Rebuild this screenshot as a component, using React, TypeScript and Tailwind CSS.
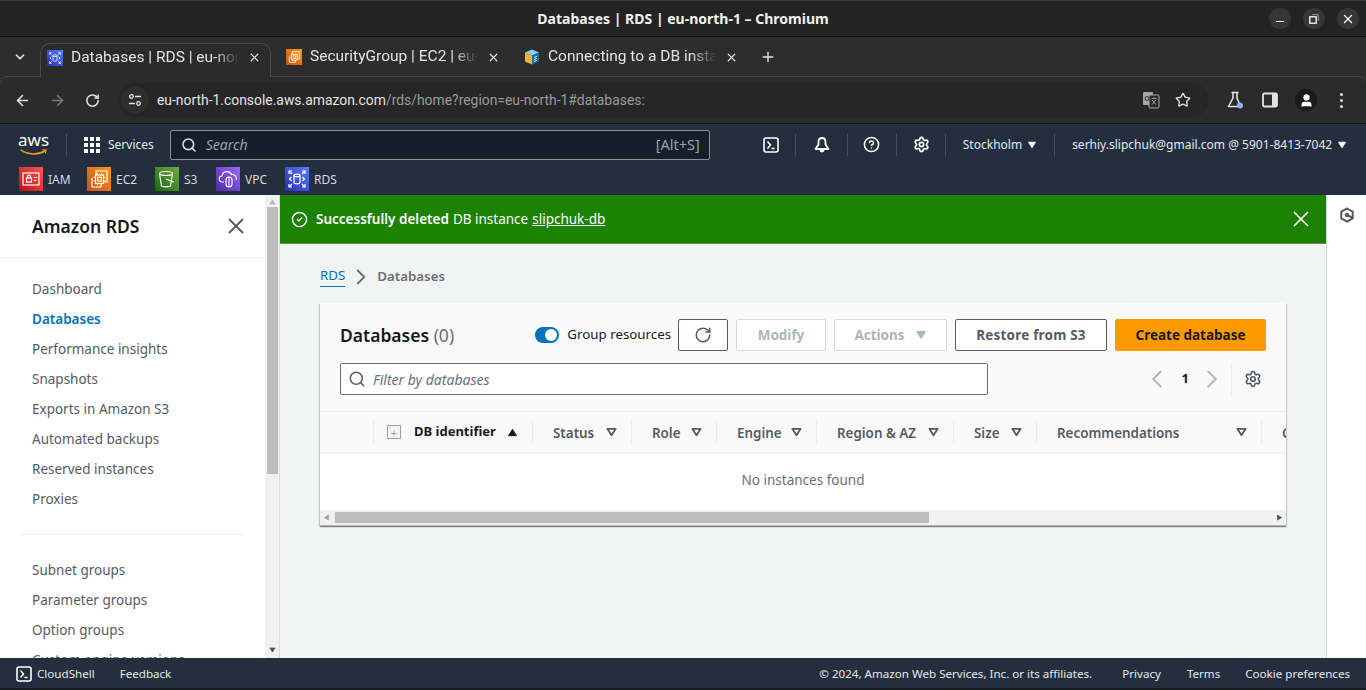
import { ArrowLeft, ArrowRight, RotateCw, ChevronDown, ChevronLeft, ChevronRight, X, Plus, Star, Search, Settings, CircleHelp, User, CircleCheck } from 'lucide-react';

const sans = 'font-["Noto_Sans",sans-serif]';
const chrome = 'font-["Roboto",sans-serif]';

function RdsIcon() {
  return (
    <svg viewBox="0 0 24 24" className="h-full w-full bg-linear-to-tr from-[#2e27ad] to-[#527fff]">
      <g fill="none" stroke="#fff" strokeWidth="1.2">
        <path d="M4 7V4h3M20 7V4h-3M4 17v3h3M20 17v3h-3" />
        <path d="M4 4l3 3M20 4l-3 3M4 20l3-3M20 20l-3-3" />
        <ellipse cx="12" cy="8.500" rx="3" ry="1.300" />
        <path d="M9 8.500v7c0 .8 1.400 1.300 3 1.300s3-.5 3-1.300v-7" />
        <path d="M6.500 10L4.500 12l2 2M17.500 10l2 2-2 2" />
      </g>
    </svg>
  );
}

function Ec2Icon() {
  return (
    <svg viewBox="0 0 24 24" className="h-full w-full bg-linear-to-tr from-[#c8511b] to-[#ff9900]">
      <g fill="none" stroke="#fff" strokeWidth="1.200">
        <path d="M5 11v9h9v-3" />
        <path d="M9 8V4h11v11h-3" />
        <rect x="8.500" y="8" width="8" height="8.500" />
        <rect x="10.700" y="10.200" width="3.600" height="4" />
        <path d="M10.500 6v2M14.500 6v2M10.500 16.500v2M14.500 16.500v2M6.500 10.500h2M6.500 14h2M16.500 10.500h2M16.500 14h2" strokeWidth="0.900" />
      </g>
    </svg>
  );
}

function S3Icon() {
  return (
    <svg viewBox="0 0 24 24" className="h-full w-full bg-linear-to-tr from-[#1b660f] to-[#6cae3e]">
      <g fill="none" stroke="#fff" strokeWidth="1.200">
        <ellipse cx="11" cy="6.500" rx="6.500" ry="2" />
        <path d="M4.500 6.500L6.500 19c1.500 1.200 7.500 1.200 9 0l2-12.500" />
        <path d="M11 12l8 3" />
      </g>
    </svg>
  );
}

function VpcIcon() {
  return (
    <svg viewBox="0 0 24 24" className="h-full w-full bg-linear-to-tr from-[#4d27a8] to-[#a166ff]">
      <g fill="none" stroke="#fff" strokeWidth="1.100">
        <path d="M8 15H6.500a3 3 0 0 1-.5-6 5 5 0 0 1 9.500-1.500A4 4 0 0 1 20 13" />
        <rect x="10" y="10" width="6" height="10" rx="3" />
        <path d="M13 10v10" />
      </g>
    </svg>
  );
}

function IamIcon() {
  return (
    <svg viewBox="0 0 24 24" className="h-full w-full bg-linear-to-tr from-[#bd0816] to-[#ff5252]">
      <g fill="none" stroke="#fff" strokeWidth="1.200">
        <rect x="4" y="6" width="16" height="12" />
        <rect x="7.500" y="11" width="5" height="4" />
        <path d="M8.500 11V9.500a1.500 1.500 0 0 1 3 0V11M15 10.500h3M15 13.500h2" />
      </g>
    </svg>
  );
}

function CubeIcon() {
  return (
    <svg viewBox="0 0 16 16" className="h-4 w-4">
      <path d="M8 0.500l7 3-7 3-7-3z" fill="#8dd0ee" />
      <path d="M1 3.500l7 3v9l-7-3z" fill="#f1b333" />
      <path d="M15 3.500l-7 3v9l7-3z" fill="#1f6fa8" />
      <path d="M10 8.500l3-1.200M10 10.500l3-1.200M10 12.500l3-1.200" stroke="#fff" strokeWidth="0.800" />
    </svg>
  );
}

function ConsoleIcon() {
  return (
    <svg viewBox="0 0 16 16" className="h-4 w-4">
      <rect x="1" y="1" width="14" height="14" rx="2" fill="none" stroke="#fff" strokeWidth="1.600" />
      <path d="M4.500 4.500L7.500 8l-3 3.500M8.500 11.500h3" fill="none" stroke="#fff" strokeWidth="1.500" />
    </svg>
  );
}

function BellIcon() {
  return (
    <svg viewBox="0 0 18 18" className="ml-[17px] h-[18px] w-[18px]">
      <path d="M9 2C6.800 2 5.500 3.800 5.500 6v2.500L2.500 13h13l-3-4.500V6C12.500 3.800 11.200 2 9 2z" fill="none" stroke="#fff" strokeWidth="1.800" strokeLinejoin="round" />
      <path d="M6.500 14a2.500 2.500 0 0 0 5 0z" fill="#fff" />
    </svg>
  );
}

function TranslateIcon() {
  return (
    <svg viewBox="0 0 18 18" className="ml-auto h-[18px] w-[18px]">
      <rect x="1" y="1" width="10" height="13" rx="1" fill="#a6a6a6" />
      <rect x="7" y="4" width="10" height="13" rx="1" fill="#2b2b2b" stroke="#a6a6a6" strokeWidth="1" />
      <circle cx="5" cy="7.500" r="2" fill="none" stroke="#2b2b2b" strokeWidth="1" />
      <path d="M9.500 7.500h5M12 6.500v1M10 9l4 4.500M14 9l-4 4.500" fill="none" stroke="#a6a6a6" strokeWidth="0.900" />
    </svg>
  );
}

function FlaskIcon() {
  return (
    <svg viewBox="0 0 18 18" className="ml-[18px] h-[18px] w-[18px]">
      <path d="M5.500 1.500h7M7 1.500v5.500L2.500 15.500h12L11 7V1.500" fill="none" stroke="#e3e3e3" strokeWidth="1.600" strokeLinejoin="round" />
      <circle cx="14" cy="14.500" r="3" fill="#8ab4f8" />
    </svg>
  );
}

function PanelIcon() {
  return (
    <svg viewBox="0 0 16 16" className="ml-[18px] h-4 w-4">
      <rect x="1" y="1.500" width="14" height="13" rx="1.500" fill="none" stroke="#e3e3e3" strokeWidth="1.800" />
      <rect x="10" y="1.500" width="5" height="13" fill="#e3e3e3" />
    </svg>
  );
}

function Tab({ icon, title, active }: { icon: React.ReactNode; title: string; active?: boolean }) {
  return (
    <div className={`relative z-10 flex w-[231px] shrink-0 items-center ${active ? '-mb-px h-[34px] rounded-t-[10px] border-x border-t border-[#4a4a4a] bg-[#2b2b2b] pb-[6px] pl-[6px]' : 'h-[33px] pb-[5px] pl-[8px]'}`}>
      <span className="flex h-4 w-4 shrink-0 items-center justify-center overflow-hidden">{icon}</span>
      <span className={`ml-[8px] w-[168px] overflow-hidden text-[15.500px] whitespace-nowrap text-[#e3e3e3] [mask-image:linear-gradient(to_right,black_85%,transparent)] ${chrome}`}>
        {title}
      </span>
      <X className="ml-[9px] h-[13px] w-[13px] shrink-0 text-[#e3e3e3]" strokeWidth={2.200} />
    </div>
  );
}

function Pipe({ className }: { className: string }) {
  return <div className={`h-[22px] w-px bg-[#414d5c] ${className}`} />;
}

function Shortcut({ icon, label, width }: { icon: React.ReactNode; label: string; width: string }) {
  return (
    <div className={`flex items-center ${width}`}>
      <span className="h-6 w-6 overflow-hidden">{icon}</span>
      <span className="ml-[5px] pt-[1px] text-[12px] text-[#d5dbdb]">{label}</span>
    </div>
  );
}

function Caret({ className }: { className: string }) {
  return (
    <svg viewBox="0 0 12 10" className={className}>
      <path d="M1.500 1.500h9L6 8.500z" fill="currentColor" stroke="currentColor" strokeWidth="1" strokeLinejoin="round" />
    </svg>
  );
}

function HollowCaret() {
  return (
    <svg viewBox="0 0 12 10" className="h-[10px] w-[11px] text-[#545b64]">
      <path d="M1.500 1.500h9L6 8.500z" fill="none" stroke="currentColor" strokeWidth="2" strokeLinejoin="round" />
    </svg>
  );
}

function Col({ label, width }: { label: string; width: string }) {
  return (
    <div className={`flex h-[22px] shrink-0 items-center justify-between border-r border-[#eaeded] pr-[14px] pl-[20px] ${width}`}>
      <span className="pt-[2px] text-[13.400px] font-semibold text-[#545b64]">{label}</span>
      <HollowCaret />
    </div>
  );
}

const primaryNav = ['Dashboard', 'Databases', 'Performance insights', 'Snapshots', 'Exports in Amazon S3', 'Automated backups', 'Reserved instances', 'Proxies'];
const secondaryNav = ['Subnet groups', 'Parameter groups', 'Option groups', 'Custom engine versions'];

export default function App() {
  return (
    <div className={`flex h-[690px] w-[1366px] flex-col overflow-hidden bg-white ${sans}`}>
      {/* window title */}
      <div className="relative flex h-[37px] shrink-0 items-center justify-center border-t border-[#3a3a3a] border-b border-b-[#111] bg-[#232323]">
        <span className="text-[14px] font-bold text-[#f2f2f2]">Databases | RDS | eu-north-1 – Chromium</span>
        <div className="absolute top-[7px] right-[7px] flex gap-[12px]">
          <span className="flex h-[21px] w-[22px] items-center justify-center rounded-full bg-[#373737]"><span className="mt-[6px] h-[1.500px] w-[8px] bg-white" /></span>
          <span className="flex h-[21px] w-[22px] items-center justify-center rounded-full bg-[#373737]">
            <svg viewBox="0 0 10 10" className="h-[10px] w-[10px]">
              <rect x="0.800" y="2.800" width="6.400" height="6.400" fill="none" stroke="#fff" strokeWidth="1.300" />
              <path d="M3 0.700h6.300V7" fill="none" stroke="#999" strokeWidth="1" />
            </svg>
          </span>
          <span className="flex h-[21px] w-[22px] items-center justify-center rounded-full bg-[#373737]"><X className="h-[14px] w-[14px] text-white" strokeWidth={2.200} /></span>
        </div>
      </div>

      <div className="flex shrink-0 flex-col bg-[#2d2d2d]">
        {/* tab strip */}
        <div className="flex h-[39px] shrink-0 items-end">
          <div className="flex h-[33px] w-[40px] items-center justify-center pb-[5px]">
            <ChevronDown className="h-[14px] w-[14px] text-[#e3e3e3]" strokeWidth={3} />
          </div>
          <Tab active icon={<RdsIcon />} title="Databases | RDS | eu-north-1" />
          <div className="w-[7px]" />
          <Tab icon={<Ec2Icon />} title="SecurityGroup | EC2 | eu-north-1" />
          <div className="w-[7px]" />
          <Tab icon={<CubeIcon />} title="Connecting to a DB instance" />
          <Plus className="mb-[11px] ml-[13px] h-4 w-4 text-[#e3e3e3]" strokeWidth={2} />
        </div>

        {/* toolbar */}
        <div className="flex h-[47px] shrink-0 items-center rounded-t-[8px] border-t border-[#4a4a4a] bg-[#2b2b2b]">
          <ArrowLeft className="ml-[14px] h-[17px] w-[17px] text-[#e3e3e3]" strokeWidth={2.200} />
          <ArrowRight className="ml-[18px] h-[17px] w-[17px] text-[#777]" strokeWidth={2.200} />
          <RotateCw className="ml-[19px] h-[15px] w-[15px] text-[#e3e3e3]" strokeWidth={2.400} />
          <div className="ml-[19px] flex h-[34px] w-[1089px] items-center rounded-full bg-[#262626] pl-[2px]">
            <span className="flex h-[28px] w-[28px] items-center justify-center rounded-full bg-[#2e2e2e]">
              <svg viewBox="0 0 14 14" className="h-[14px] w-[14px]">
                <circle cx="3.500" cy="3.500" r="1.800" fill="none" stroke="#e3e3e3" strokeWidth="1.300" />
                <path d="M7 3.500h6M1 10.500h6" stroke="#e3e3e3" strokeWidth="1.300" />
                <circle cx="10.500" cy="10.500" r="1.800" fill="none" stroke="#e3e3e3" strokeWidth="1.300" />
              </svg>
            </span>
            <span className={`ml-[8px] text-[13.900px] text-[#e3e3e3] ${chrome}`}>
              eu-north-1.console.aws.amazon.com<span className="text-[#9a9a9a]">/rds/home?region=eu-north-1#databases:</span>
            </span>
            <TranslateIcon />
            <Star className="mr-[17px] ml-[15px] h-[16px] w-[16px] text-[#e3e3e3]" strokeWidth={2} />
          </div>
          <FlaskIcon />
          <PanelIcon />
          <span className="ml-[17px] flex h-[22px] w-[22px] items-center justify-center rounded-full bg-[#1a1a1a]">
            <User className="h-[15px] w-[15px] fill-white text-white" />
          </span>
          <span className="ml-[23px] flex flex-col gap-[3px]">
            <span className="h-[3px] w-[3px] rounded-full bg-[#e3e3e3]" />
            <span className="h-[3px] w-[3px] rounded-full bg-[#e3e3e3]" />
            <span className="h-[3px] w-[3px] rounded-full bg-[#e3e3e3]" />
          </span>
        </div>
      </div>

      {/* aws header */}
      <div className="flex h-[72px] shrink-0 flex-col border-t border-[#111] bg-[#232f3e]">
        <div className="flex h-[43px] shrink-0 items-center pb-[2px]">
          <div className="relative ml-[18px] h-[26px] w-[31px]">
            <span className="absolute -top-[3px] left-0 text-[17px] leading-[22px] text-white">aws</span>
            <svg viewBox="0 0 31 8" className="absolute top-[17px] left-0 h-[7px] w-[31px]">
              <path d="M1 1c8 6 20 6 28 1" fill="none" stroke="#ff9900" strokeWidth="1.800" />
              <path d="M26 1l4 0-1 4" fill="none" stroke="#ff9900" strokeWidth="1.200" />
            </svg>
          </div>
          <Pipe className="ml-[17px]" />
          <div className="ml-[17px] grid h-4 w-4 grid-cols-3 gap-[2px]">
            {[0, 1, 2, 3, 4, 5, 6, 7, 8].map((i) => (
              <span key={i} className="h-[4px] w-[4px] bg-white" />
            ))}
          </div>
          <span className="ml-[8px] text-[12px] text-[#e5e8e8]">Services</span>
          <div className="ml-[16px] flex h-[30px] w-[540px] items-center rounded-[2px] border border-[#879596] bg-[#161e2d]">
            <Search className="ml-[10px] h-[16px] w-[16px] text-[#d5dbdb]" strokeWidth={2.400} />
            <span className="ml-[9px] text-[14px] text-[#95a5a6] italic">Search</span>
            <span className="mr-[9px] ml-auto text-[14.500px] text-[#95a5a6]">[Alt+S]</span>
          </div>
          <div className="ml-[53px] flex h-4 w-4 items-center"><ConsoleIcon /></div>
          <Pipe className="ml-[16px]" />
          <BellIcon />
          <Pipe className="ml-[16px]" />
          <CircleHelp className="ml-[15px] h-[17px] w-[17px] text-white" strokeWidth={2.200} />
          <Pipe className="ml-[16px]" />
          <Settings className="ml-[16px] h-[17px] w-[17px] text-white" strokeWidth={2.400} />
          <Pipe className="ml-[15px]" />
          <span className="ml-[17px] text-[12px] text-[#e5e8e8]">Stockholm</span>
          <Caret className="ml-[5px] h-[8px] w-[10px] text-white" />
          <Pipe className="ml-[17px]" />
          <span className="ml-[17px] text-[12px] text-[#e5e8e8]">serhiy.slipchuk@gmail.com @ 5901-8413-7042</span>
          <Caret className="ml-[5px] h-[8px] w-[10px] text-white" />
        </div>
        <div className="flex items-center pl-[19px]">
          <Shortcut icon={<IamIcon />} label="IAM" width="w-[68px]" />
          <Shortcut icon={<Ec2Icon />} label="EC2" width="w-[68px]" />
          <Shortcut icon={<S3Icon />} label="S3" width="w-[61px]" />
          <Shortcut icon={<VpcIcon />} label="VPC" width="w-[69px]" />
          <Shortcut icon={<RdsIcon />} label="RDS" width="w-[68px]" />
        </div>
      </div>

      {/* body */}
      <div className="flex min-h-0 flex-1">
        <aside className="w-[265px] shrink-0 overflow-hidden bg-white">
          <div className="flex h-[63px] items-center justify-between border-b border-[#eaeded] pr-[16px] pl-[32px]">
            <span className="text-[17.500px] font-semibold text-[#16191f]">Amazon RDS</span>
            <X className="h-[26px] w-[26px] text-[#545b64]" strokeWidth={1.800} />
          </div>
          <div className="flex flex-col pt-[16px] pl-[32px] text-[13.500px] leading-[30px] text-[#545b64]">
            {primaryNav.map((n) => (
              <span key={n} className={n === 'Databases' ? 'font-semibold text-[#0073bb]' : ''}>{n}</span>
            ))}
          </div>
          <div className="mx-[20px] mt-[20px] border-t border-[#eaeded]" />
          <div className="flex flex-col pt-[20px] pl-[32px] text-[13.500px] leading-[30px] text-[#545b64]">
            {secondaryNav.map((n) => (
              <span key={n}>{n}</span>
            ))}
          </div>
        </aside>

        {/* page scrollbar */}
        <div className="flex w-[15px] shrink-0 flex-col items-center border-r border-[#ddd] bg-[#f1f1f1]">
          <Caret className="mt-[4px] h-[6px] w-[9px] rotate-180 text-[#b0b0b0]" />
          <div className="mt-[2px] h-[267px] w-[11px] bg-[#bdbdbd]" />
          <Caret className="mt-auto mb-[5px] h-[6px] w-[9px] text-[#505050]" />
        </div>

        {/* content */}
        <main className="flex min-w-0 flex-1 flex-col bg-[#f2f3f3]">
          <div className="flex h-[49px] shrink-0 items-center justify-between border-b border-[#879596]/60 bg-[#1d8102] pr-[12px] pl-[11px]">
            <div className="flex items-center text-[13.500px] text-white">
              <CircleCheck className="h-[17px] w-[17px]" strokeWidth={2} />
              <span className="ml-[8px] font-semibold">Successfully deleted</span>
              <span className="ml-[4px]">DB instance</span>
              <span className="ml-[4px] underline">slipchuk-db</span>
            </div>
            <X className="h-[26px] w-[26px] text-white" strokeWidth={1.600} />
          </div>

          <div className="flex h-[59px] shrink-0 items-center pt-[6px] pl-[40px] text-[13.300px]">
            <span className="border-b border-[#0073bb] text-[#0073bb]">RDS</span>
            <ChevronRight className="ml-[3px] h-[26px] w-[26px] text-[#687078]" strokeWidth={1.700} />
            <span className="ml-[3px] font-semibold text-[#687078]">Databases</span>
          </div>

          <section className="ml-[40px] flex h-[223px] w-[966px] shrink-0 flex-col border-b border-[#aab7b8] bg-[#fafafa] shadow-[0_1px_1px_rgba(0,28,36,0.3),1px_1px_1px_rgba(0,28,36,0.15),-1px_1px_1px_rgba(0,28,36,0.15)]">
            <div className="flex h-[48px] shrink-0 items-end px-[20px]">
              <div className="flex h-[32px] items-center whitespace-nowrap">
                <span className="text-[17.500px] font-semibold text-[#16191f]">Databases <span className="font-normal text-[#687078]">(0)</span></span>
              </div>
              <div className="ml-auto flex h-[32px] items-center whitespace-nowrap">
                <span className="flex h-4 w-[24px] items-center justify-end rounded-full bg-[#0073bb] pr-[2px]"><span className="h-3 w-3 rounded-full bg-white" /></span>
                <span className="ml-[8px] text-[13.300px] text-[#16191f]">Group resources</span>
              </div>
              <div className="ml-[7px] flex h-[32px] w-[50px] items-center justify-center rounded-[2px] border border-[#545b64] bg-white">
                <RotateCw className="h-[18px] w-[18px] text-[#545b64]" strokeWidth={2} />
              </div>
              <div className="ml-[8px] flex h-[32px] w-[90px] items-center justify-center rounded-[2px] border border-[#d5dbdb] bg-white text-[13.500px] font-bold text-[#aab7b8]">Modify</div>
              <div className="ml-[8px] flex h-[32px] w-[113px] items-center justify-center rounded-[2px] border border-[#d5dbdb] bg-white text-[13.500px] font-bold text-[#aab7b8]">
                Actions
                <Caret className="ml-[10px] h-[10px] w-[12px] text-[#aab7b8]" />
              </div>
              <div className="ml-[8px] flex h-[32px] w-[152px] items-center justify-center rounded-[2px] border border-[#545b64] bg-white text-[13.500px] font-bold tracking-[0.200px] text-[#545b64]">Restore from S3</div>
              <div className="ml-[8px] flex h-[32px] w-[151px] items-center justify-center rounded-[2px] bg-[#ff9900] text-[13.500px] font-bold text-[#16191f]">Create database</div>
            </div>

            <div className="mt-[12px] flex h-[32px] shrink-0 items-center px-[20px]">
              <div className="flex h-[32px] w-[648px] items-center rounded-[2px] border border-[#687078] bg-white">
                <Search className="ml-[7px] h-[18px] w-[18px] text-[#545b64]" strokeWidth={2} />
                <span className="ml-[7px] text-[14px] text-[#687078] italic">Filter by databases</span>
              </div>
              <ChevronLeft className="ml-[154px] h-[30px] w-[30px] text-[#aab7b8]" strokeWidth={1.500} />
              <span className="ml-[9.500px] text-[13px] font-bold text-[#16191f]">1</span>
              <ChevronRight className="ml-[8.500px] h-[30px] w-[30px] text-[#aab7b8]" strokeWidth={1.500} />
              <div className="ml-[4px] h-[32px] w-px bg-[#eaeded]" />
              <Settings className="ml-[12px] h-[18px] w-[18px] text-[#545b64]" strokeWidth={2.200} />
            </div>

            <div className="mt-[16px] flex h-[42px] shrink-0 items-center overflow-hidden border-y border-[#eaeded]">
              <div className="h-[22px] w-[54px] shrink-0 border-r border-[#eaeded]" />
              <div className="flex h-[22px] w-[159px] shrink-0 items-center border-r border-[#eaeded] pl-[13px]">
                <span className="flex h-[14px] w-[14px] items-center justify-center border border-[#95a5a6] bg-[#f2f3f3] text-[11px] leading-none text-[#95a5a6]">+</span>
                <span className="ml-[13px] text-[13px] font-bold text-[#16191f]">DB identifier</span>
                <Caret className="ml-[11px] h-[9px] w-[11px] rotate-180 text-[#16191f]" />
              </div>
              <Col label="Status" width="w-[99px]" />
              <Col label="Role" width="w-[85px]" />
              <Col label="Engine" width="w-[100px]" />
              <Col label="Region & AZ" width="w-[137px]" />
              <Col label="Size" width="w-[83px]" />
              <Col label="Recommendations" width="w-[225px]" />
              <span className="ml-[20px] pt-[2px] text-[13.400px] font-semibold text-[#545b64]">CPU</span>
            </div>

            <div className="flex flex-1 items-start justify-center bg-white pt-[17px] text-[13.500px] text-[#687078]">No instances found</div>

            <div className="flex h-[15px] shrink-0 items-center bg-[#f1f1f1]">
              <Caret className="ml-[3px] h-[7px] w-[7px] rotate-90 text-[#a0a0a0]" />
              <div className="ml-[5px] h-[11px] w-[594px] bg-[#bdbdbd]" />
              <Caret className="mr-[3px] ml-auto h-[7px] w-[7px] -rotate-90 text-[#505050]" />
            </div>
          </section>
        </main>

        {/* right rail */}
        <div className="flex w-[40px] shrink-0 justify-center border-l border-[#d5dbdb] bg-white pt-[12px]">
          <svg viewBox="0 0 16 16" className="h-4 w-4">
            <path d="M8 1.500l5.700 3.200v6.600L8 14.500l-5.700-3.200V4.700z" fill="none" stroke="#545b64" strokeWidth="2" />
            <circle cx="8" cy="8" r="2.200" fill="#545b64" />
            <path d="M8 8l6 3" stroke="#545b64" strokeWidth="2" />
          </svg>
        </div>
      </div>

      {/* footer */}
      <div className="flex h-[32px] shrink-0 items-center border-b-[2px] border-[#16191f] bg-[#232f3e] pt-[2px] text-[11.600px] whitespace-nowrap text-[#e5e8e8]">
        <div className="ml-[16px]"><ConsoleIcon /></div>
        <span className="ml-[5px]">CloudShell</span>
        <span className="ml-[25px]">Feedback</span>
        <span className="ml-auto">© 2024, Amazon Web Services, Inc. or its affiliates.</span>
        <span className="ml-[30px]">Privacy</span>
        <span className="ml-[26px]">Terms</span>
        <span className="mr-[16px] ml-[25px]">Cookie preferences</span>
      </div>
    </div>
  );
}
